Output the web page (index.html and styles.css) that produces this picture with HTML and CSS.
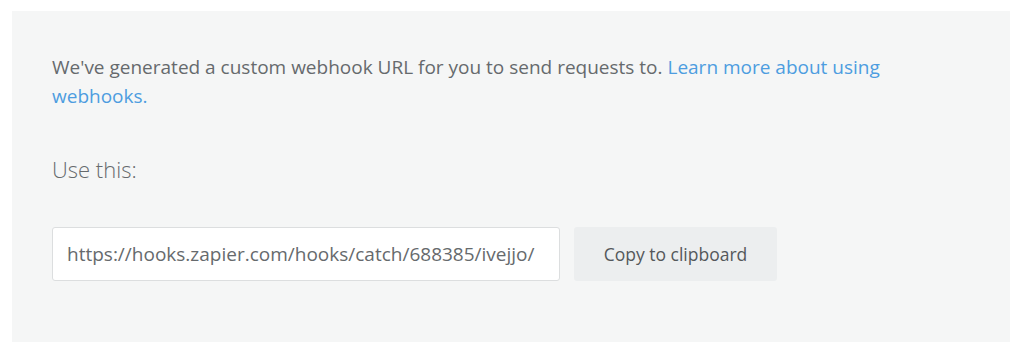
FILE: index.html
```html
<!DOCTYPE html>
<html>
<head>
<meta charset="utf-8">
<link rel="stylesheet" href="styles.css">
</head>
<body>
<div class="page">
  <section class="panel">
    <p class="intro">We've generated a custom webhook URL for you to send requests to. <a class="link" href="#">Learn more about using webhooks.</a></p>
    <h3 class="label">Use this:</h3>
    <div class="row">
      <input class="url" type="text" value="https://hooks.zapier.com/hooks/catch/688385/ivejjo/" readonly>
      <button class="copy" type="button">Copy to clipboard</button>
    </div>
  </section>
</div>
</body>
</html>
```

FILE: styles.css
```css
html, body {
  margin: 0;
  padding: 0;
  background: #ffffff;
}
body {
  font-family: "Open Sans", "Liberation Sans", sans-serif;
  color: #666a6d;
}
.page {
  padding: 11px 14px 12px 12px;
}
.panel {
  background: #f5f6f6;
  height: 331px;
  box-sizing: border-box;
  padding: 42px 40px 0 40px;
}
.intro {
  margin: 0;
  font-size: 19px;
  line-height: 29px;
  max-width: 880px;
}
.link {
  color: #4d9de0;
  text-decoration: none;
}
.label {
  margin: 43px 0 0 0;
  font-size: 22px;
  font-weight: 300;
  line-height: 30px;
  color: #666a6d;
}
.row {
  display: flex;
  gap: 14px;
  margin-top: 43px;
}
.url {
  width: 508px;
  height: 54px;
  box-sizing: border-box;
  border: 1px solid #dcdedf;
  border-radius: 3px;
  background: #ffffff;
  padding: 0 14px;
  font-family: "Open Sans", "Liberation Sans", sans-serif;
  font-size: 19px;
  color: #666a6d;
  outline: none;
}
.copy {
  width: 203px;
  height: 54px;
  border: none;
  border-radius: 3px;
  background: #eceeef;
  font-family: "Open Sans", "Liberation Sans", sans-serif;
  font-size: 17.5px;
  color: #54585b;
  padding: 0;
}
```
